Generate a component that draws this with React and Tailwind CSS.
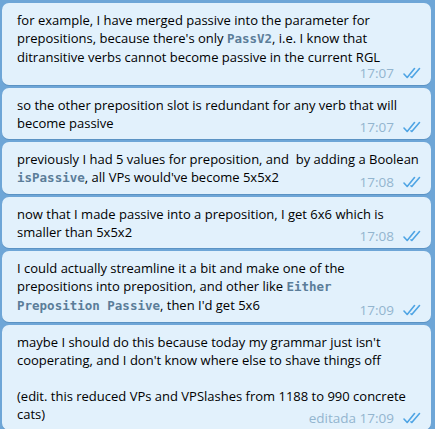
const Check = () => (
  <svg width="20" height="12" viewBox="0 0 20 12" fill="none" stroke="#4ea4e4" strokeWidth="1.6" strokeLinecap="round" strokeLinejoin="round">
    <path d="M1 7 L4.2 10.5 L11.5 1.5" />
    <path d="M8 9.8 L8.8 10.5 L16.5 1.5" />
  </svg>
);

const Code = ({ children }) => (
  <span className="font-['DejaVu_Sans_Mono',monospace] font-bold text-[12.5px] text-[#5b7d99]">{children}</span>
);

function Bubble({ time, children, extra }) {
  return (
    <div className={`relative bg-[#e2f1fc] rounded-[7px] shadow-[0_1px_0_#5b93c4] pl-[15px] pr-[12px] pt-[8px] ${extra ? 'pb-[19px]' : 'pb-[7px]'}`}>
      <div className="text-[13px] leading-[18px] text-black whitespace-nowrap">{children}</div>
      <div className="absolute right-[8px] bottom-[5px] flex items-center gap-[9px]">
        <span className="text-[13.5px] leading-[14px] text-[#93b5cf]">{time}</span>
        <Check />
      </div>
    </div>
  );
}

export default function App() {
  return (
    <div className="w-[435px] h-[429px] bg-[#6ea6d7] pt-[3px] pl-[2px] pr-[4px] flex flex-col gap-[3px] overflow-hidden font-['Open_Sans',sans-serif]">
      <Bubble time="17:07" extra>
        for example, I have merged passive into the parameter for<br />
        prepositions, because there's only <Code>PassV2</Code>, i.e. I know that<br />
        ditransitive verbs cannot become passive in the current RGL
      </Bubble>
      <Bubble time="17:07">
        so the other preposition slot is redundant for any verb that will<br />
        become passive
      </Bubble>
      <Bubble time="17:08">
        previously I had 5 values for preposition, and&nbsp; by adding a Boolean<br />
        <Code>isPassive</Code>, all VPs would've become 5x5x2
      </Bubble>
      <Bubble time="17:08">
        now that I made passive into a preposition, I get 6x6 which is<br />
        smaller than 5x5x2
      </Bubble>
      <Bubble time="17:09">
        I could actually streamline it a bit and make one of the<br />
        prepositions into preposition, and other like <Code>Either</Code><br />
        <Code>Preposition Passive</Code>, then I'd get 5x6
      </Bubble>
      <Bubble time="editada 17:09">
        maybe I should do this because today my grammar just isn't<br />
        cooperating, and I don't know where else to shave things off<br />
        <br />
        (edit. this reduced VPs and VPSlashes from 1188 to 990 concrete<br />
        cats)
      </Bubble>
    </div>
  );
}
